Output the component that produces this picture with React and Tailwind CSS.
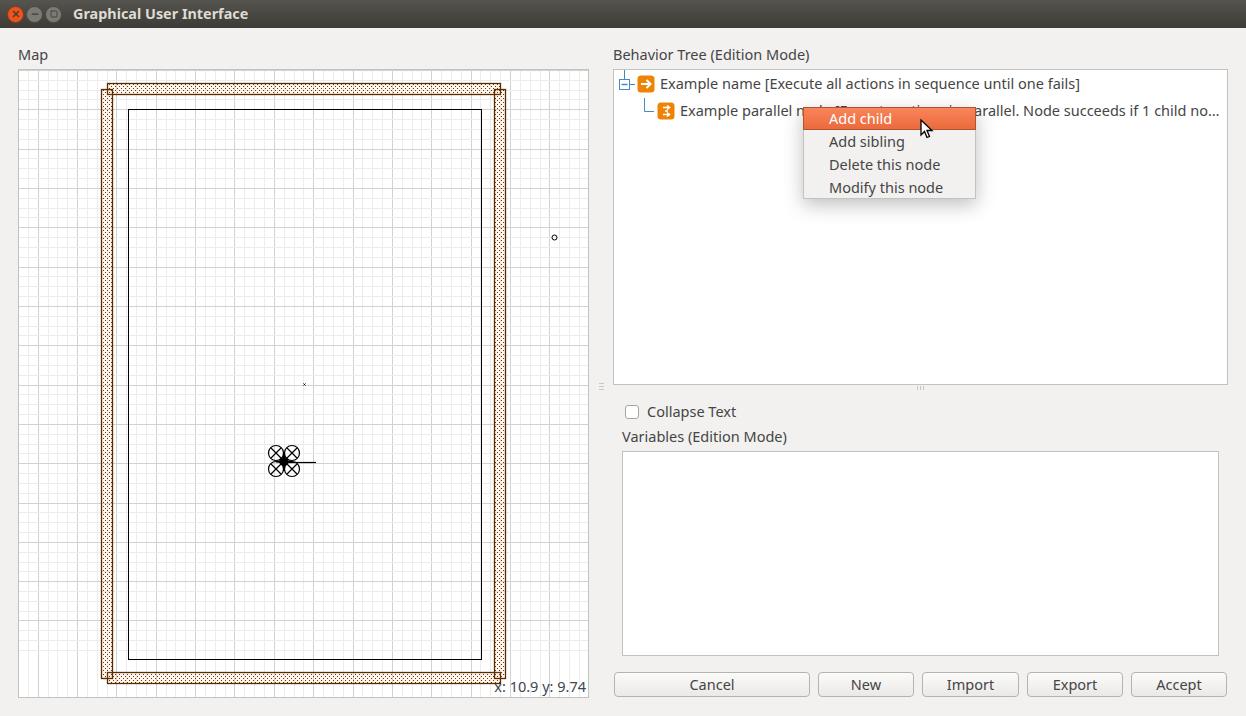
import React from 'react';
import { Minus, Square, X } from 'lucide-react';

const FootprintRect = ({ x, y, width, height }) => (
    <rect x={x} y={y} width={width} height={height} fill="url(#dots)" stroke="#5a2a00" strokeWidth="1.3" />
);

const Rotor = ({ cx, cy }) => (
    <g>
        <circle cx={cx} cy={cy} r="7.5" />
        <path d={`M${cx - 5} ${cy - 5}L${cx + 5} ${cy + 5}M${cx + 5} ${cy - 5}L${cx - 5} ${cy + 5}`} />
    </g>
);

// map canvas, coordinates are relative to the box
const MapCanvas = () => {
    const vLines = [];
    const hLines = [];
    for (let i = 0; i < 60; i++) {
        const x = Math.round(i * 9.84);
        const y = Math.round(i * 9.83);
        vLines.push(<line key={i} x1={x - 0.5} y1="0" x2={x - 0.5} y2="630" stroke={(i - 2) % 4 === 0 ? '#d2d2d2' : '#ececec'} />);
        hLines.push(<line key={i} x1="0" y1={y + 0.5} x2="571" y2={y + 0.5} stroke={i % 4 === 0 ? '#d2d2d2' : '#ececec'} />);
    }
    return (
        <svg width="569" height="627" viewBox="0 0 569 627" className="block">
            <defs>
                <pattern id="dots" width="4" height="4" patternUnits="userSpaceOnUse">
                    <rect width="4" height="4" fill="#f59a3a" fillOpacity="0.08" />
                    <rect x="0" y="0" width="1" height="1" fill="#6e3500" />
                    <rect x="2" y="2" width="1" height="1" fill="#6e3500" />
                </pattern>
            </defs>
            {vLines}
            {hLines}
            <FootprintRect x={88.5} y={13.5} width={393} height={11} />
            <FootprintRect x={88.5} y={602.5} width={393} height={11} />
            <FootprintRect x={82.5} y={19.5} width={11} height={589} />
            <FootprintRect x={475.5} y={19.5} width={11} height={589} />
            <rect x="109.5" y="39.5" width="353" height="550" fill="none" stroke="#000" shapeRendering="crispEdges" />
            <circle cx="535.5" cy="167.5" r="2.5" fill="none" stroke="#000" />
            <path d="M284.5 313.5l2 2m0-2l-2 2" stroke="#000" />
            <g fill="none" stroke="#000" strokeWidth="1.2">
                <Rotor cx={257} cy={383} />
                <Rotor cx={273} cy={383} />
                <Rotor cx={257} cy={399} />
                <Rotor cx={273} cy={399} />
                <path d="M265 392.5H297" />
            </g>
            <circle cx="265" cy="391.5" r="4.5" fill="#000" />
            <path d="M265 382v19M257 391.5h16" stroke="#000" strokeWidth="2" />
        </svg>
    );
};

const NodeIcon = ({ parallel }) => (
    <svg width="18" height="18" viewBox="0 0 18 18" className="shrink-0">
        <rect x="0.5" y="0.5" width="17" height="17" rx="3.5" fill="#ee8306" />
        {parallel ? (
            <path d="M6 5.5h6M10 3.5l2.5 2-2.5 2M6 12.5h6M10 10.5l2.5 2-2.5 2M8 9h3" fill="none" stroke="#fff" strokeWidth="1.5" />
        ) : (
            <path d="M4 9h9.5M9.5 5l4 4-4 4" fill="none" stroke="#fff" strokeWidth="2" />
        )}
    </svg>
);

const Btn = ({ label, className }) => (
    <button className={`h-[25px] rounded-[4px] border border-[#b6b2ae] bg-gradient-to-b from-[#fbfbfa] to-[#ebe9e7] text-[14.5px] text-[#454545] ${className}`}>
        {label}
    </button>
);

const App = () => {
    return (
        <div className="relative w-[1246px] h-[716px] overflow-hidden flex flex-col bg-[#f2f1f0] text-[14.5px] text-[#454545] [font-family:'Noto_Sans',sans-serif]">
            {/* title bar */}
            <div className="h-[28px] shrink-0 flex items-center bg-gradient-to-b from-[#55544e] to-[#3c3b37] pl-[7px]">
                <div className="flex items-center gap-[2px]">
                    <div className="w-[17px] h-[17px] rounded-full bg-[#e9541f] border border-[#8a3a1a] flex items-center justify-center text-[#3c3b37]"><X size={10} strokeWidth={3} /></div>
                    <div className="w-[17px] h-[17px] rounded-full bg-[#7b7a74] border border-[#4a4943] flex items-center justify-center text-[#3c3b37]"><Minus size={10} strokeWidth={3} /></div>
                    <div className="w-[17px] h-[17px] rounded-full bg-[#7b7a74] border border-[#4a4943] flex items-center justify-center text-[#3c3b37]"><Square size={8} strokeWidth={2.5} /></div>
                </div>
                <span className="ml-[11px] text-[14.4px] font-bold text-[#dfdbd2]">Graphical User Interface</span>
            </div>

            <div className="flex-1 flex pl-[18px] pr-[18px]">
                {/* left column */}
                <div className="w-[571px] shrink-0 flex flex-col">
                    <div className="h-[41px] pt-[16px] leading-[20px]">Map</div>
                    <div className="relative w-[571px] h-[629px] border border-[#c4c2bf] bg-white">
                        <MapCanvas />
                        <span className="absolute right-[2px] bottom-[2px] leading-[18px] text-[#3f4650]">x: 10.9 y: 9.74</span>
                    </div>
                </div>

                {/* splitter */}
                <div className="w-[24px] shrink-0 flex items-center justify-center">
                    <div className="flex flex-col gap-[2px] mt-[29px]">
                        <div className="w-[5px] h-[1px] bg-[#c9c7c4]" />
                        <div className="w-[5px] h-[1px] bg-[#c9c7c4]" />
                        <div className="w-[5px] h-[1px] bg-[#c9c7c4]" />
                    </div>
                </div>

                {/* right column */}
                <div className="flex-1 flex flex-col">
                    <div className="h-[41px] pt-[16px] leading-[20px]">Behavior Tree (Edition Mode)</div>
                    <div className="h-[316px] border border-[#c4c2bf] bg-white overflow-hidden">
                        <div className="h-[28px] flex items-center pl-[5px]">
                            <svg width="18" height="28" viewBox="0 0 18 28" className="shrink-0">
                                <path d="M5.5 0V9M11 14.5H16" stroke="#4a86c5" fill="none" />
                                <rect x="0.5" y="9.5" width="10" height="10" fill="#fff" stroke="#4a86c5" />
                                <path d="M2.5 14.5h6" stroke="#4a86c5" strokeWidth="1.5" />
                            </svg>
                            <NodeIcon />
                            <span className="ml-[5px] whitespace-nowrap">Example name [Execute all actions in sequence until one fails]</span>
                        </div>
                        <div className="h-[26px] flex items-center pl-[30px]">
                            <svg width="13" height="26" viewBox="0 0 13 26" className="shrink-0">
                                <path d="M0.5 0V13.5H10" stroke="#4a86c5" fill="none" />
                            </svg>
                            <NodeIcon parallel />
                            <span className="ml-[5px] whitespace-nowrap">Example parallel node [Execute actions in parallel. Node succeeds if 1 child no…</span>
                        </div>
                    </div>

                    {/* splitter */}
                    <div className="h-[6px] flex justify-center items-center gap-[1px]">
                        <div className="w-[1px] h-[4px] bg-[#c9c7c4]" />
                        <div className="w-[1px] h-[4px] bg-[#c9c7c4] ml-[1px]" />
                        <div className="w-[1px] h-[4px] bg-[#c9c7c4] ml-[1px]" />
                    </div>

                    <div className="pl-[9px] pr-[9px] flex flex-col">
                        <label className="mt-[11px] h-[20px] flex items-center">
                            <span className="w-[14px] h-[14px] ml-[3px] rounded-[3px] border border-[#a9a7a4] bg-white" />
                            <span className="ml-[8px]">Collapse Text</span>
                        </label>
                        <div className="h-[20px] mt-[4px] leading-[20px]">Variables (Edition Mode)</div>
                        <div className="h-[205px] mt-[5px] border border-[#c4c2bf] bg-white" />
                    </div>

                    <div className="mt-[16px] flex gap-[8px] pl-[1px] pr-[1px]">
                        <Btn label="Cancel" className="w-[196px]" />
                        <Btn label="New" className="w-[96px]" />
                        <Btn label="Import" className="w-[97px]" />
                        <Btn label="Export" className="w-[96px]" />
                        <Btn label="Accept" className="w-[96px]" />
                    </div>
                </div>
            </div>

            {/* context menu */}
            <div className="absolute left-[803px] top-[107px] w-[173px] h-[92px] bg-[#f2f1f0] border border-[#c4c2bf] shadow-[0_6px_18px_rgba(0,0,0,0.25)]">
                <div className="h-[23px] pl-[25px] leading-[20px] text-white bg-gradient-to-b from-[#f9855a] to-[#ea6a3c] border border-[#b2532d] -mx-[1px] -mt-[1px] mb-[1px]">Add child</div>
                <div className="h-[23px] pl-[25px] leading-[21px]">Add sibling</div>
                <div className="h-[23px] pl-[25px] leading-[21px]">Delete this node</div>
                <div className="h-[23px] pl-[25px] leading-[21px]">Modify this node</div>
            </div>

            {/* mouse cursor */}
            <svg width="14" height="20" viewBox="0 0 14 20" className="absolute left-[920px] top-[119px]">
                <path d="M1 1V16L4.5 12.5L7 18.5L9.5 17.5L7 11.5H12Z" fill="#fff" stroke="#000" strokeWidth="1.3" />
            </svg>
        </div>
    );
};

export default App;
